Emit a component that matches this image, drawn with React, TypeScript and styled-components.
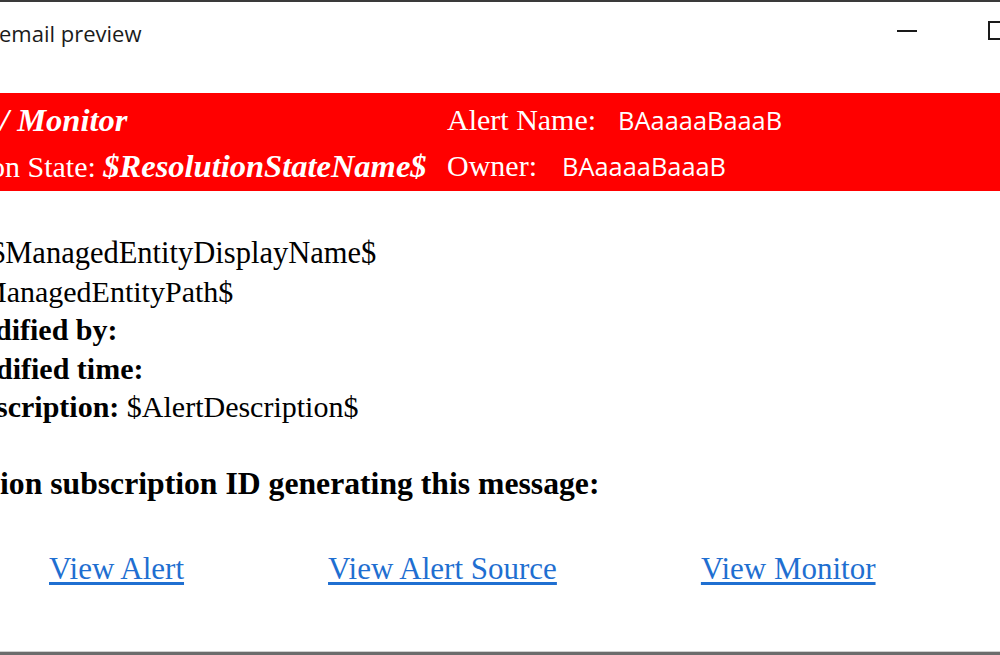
import React from 'react';
import styled, { createGlobalStyle } from 'styled-components';

const GlobalStyle = createGlobalStyle`
  html, body {
    margin: 0;
    padding: 0;
    background: #ffffff;
    overflow: hidden;
  }
`;

const SERIF = `'Liberation Serif', 'Times New Roman', serif`;
const SANS = `'Open Sans', 'Noto Sans', sans-serif`;

const Window = styled.div`
  width: 1000px;
  height: 655px;
  box-sizing: border-box;
  border-top: 2px solid #3a3a3a;
  display: flex;
  flex-direction: column;
  overflow: hidden;
  background: #ffffff;
`;

const TitleBar = styled.div`
  height: 62px;
  flex-shrink: 0;
  display: flex;
  align-items: center;
  justify-content: space-between;
`;

const Title = styled.span`
  margin-left: -1px;
  font-family: ${SANS};
  font-size: 22px;
  color: #1b1b1b;
`;

const Controls = styled.div`
  display: flex;
  align-items: center;
  gap: 71px;
  margin-right: -7px;
  margin-top: -5px;
`;

const MinimizeIcon = styled.span`
  display: block;
  width: 20px;
  height: 2px;
  background: #1a1a1a;
`;

const MaximizeIcon = styled.span`
  display: block;
  width: 19px;
  height: 19px;
  box-sizing: border-box;
  border: 2px solid #1a1a1a;
`;

const AlertBand = styled.div`
  margin-top: 29px;
  background: #ff0000;
  padding: 4px 0 1px;
  display: grid;
  grid-template-columns: 447px 1fr;
  font-family: ${SERIF};
  font-size: 30px;
  line-height: 46px;
  color: #ffffff;
  white-space: nowrap;
`;

const BandCell = styled.div<{ $cut?: number }>`
  margin-left: ${(p) => -(p.$cut || 0)}px;
  display: flex;
  align-items: baseline;
`;

const Strong = styled.span`
  font-size: 32.5px;
  font-weight: bold;
  font-style: italic;
`;

const Value = styled.span<{ $gap: number }>`
  margin-left: ${(p) => p.$gap}px;
  font-family: ${SANS};
  font-size: 25.4px;
`;

const Body = styled.div`
  margin-top: 43px;
  font-family: ${SERIF};
  font-size: 30px;
  line-height: 38.5px;
  color: #000000;
  white-space: nowrap;
`;

const Line = styled.div<{ $cut?: number; $size?: number }>`
  margin-left: ${(p) => -(p.$cut || 0)}px;
  font-size: ${(p) => p.$size || 30}px;
  height: 38.5px;
`;

const Label = styled.b`
  font-weight: bold;
`;

const Links = styled.div`
  margin-top: 46px;
  padding-left: 49px;
  display: flex;
  gap: 144px;
  font-family: ${SERIF};
  font-size: 31px;
  line-height: 38.5px;
`;

const Link = styled.a`
  color: #1f6fd1;
  text-decoration: underline;
  text-underline-offset: 3px;
  white-space: nowrap;
`;

const Spacer = styled.div`
  flex: 1;
`;

const BottomEdge = styled.div`
  flex-shrink: 0;
  height: 3px;
  border-top: 1px solid #cfcfcf;
  background: #6c6c6c;
`;

export default function App() {
  return (
    <>
      <GlobalStyle />
      <Window>
        <TitleBar>
          <Title>email preview</Title>
          <Controls>
            <MinimizeIcon />
            <MaximizeIcon />
          </Controls>
        </TitleBar>

        <AlertBand>
          <BandCell>
            <Strong>/ Monitor</Strong>
          </BandCell>
          <BandCell>
            <span>Alert Name:</span>
            <Value $gap={22}>BAaaaaBaaaB</Value>
          </BandCell>
          <BandCell $cut={10}>
            <span>on State:&nbsp;</span>
            <Strong>$ResolutionStateName$</Strong>
          </BandCell>
          <BandCell>
            <span>Owner:</span>
            <Value $gap={25}>BAaaaaBaaaB</Value>
          </BandCell>
        </AlertBand>

        <Body>
          <Line $cut={10} $size={30.5}>$ManagedEntityDisplayName$</Line>
          <Line $cut={20}>ManagedEntityPath$</Line>
          <Line $cut={5}>
            <Label>dified by:</Label>
          </Line>
          <Line $cut={4}>
            <Label>dified time:</Label>
          </Line>
          <Line $cut={4}>
            <Label>scription:</Label> $AlertDescription$
          </Line>
          <Line />
          <Line $size={31.7}>
            <Label>ion subscription ID generating this message:</Label>
          </Line>
        </Body>

        <Links>
          <Link href="#">View Alert</Link>
          <Link href="#">View Alert Source</Link>
          <Link href="#">View Monitor</Link>
        </Links>

        <Spacer />
        <BottomEdge />
      </Window>
    </>
  );
}
